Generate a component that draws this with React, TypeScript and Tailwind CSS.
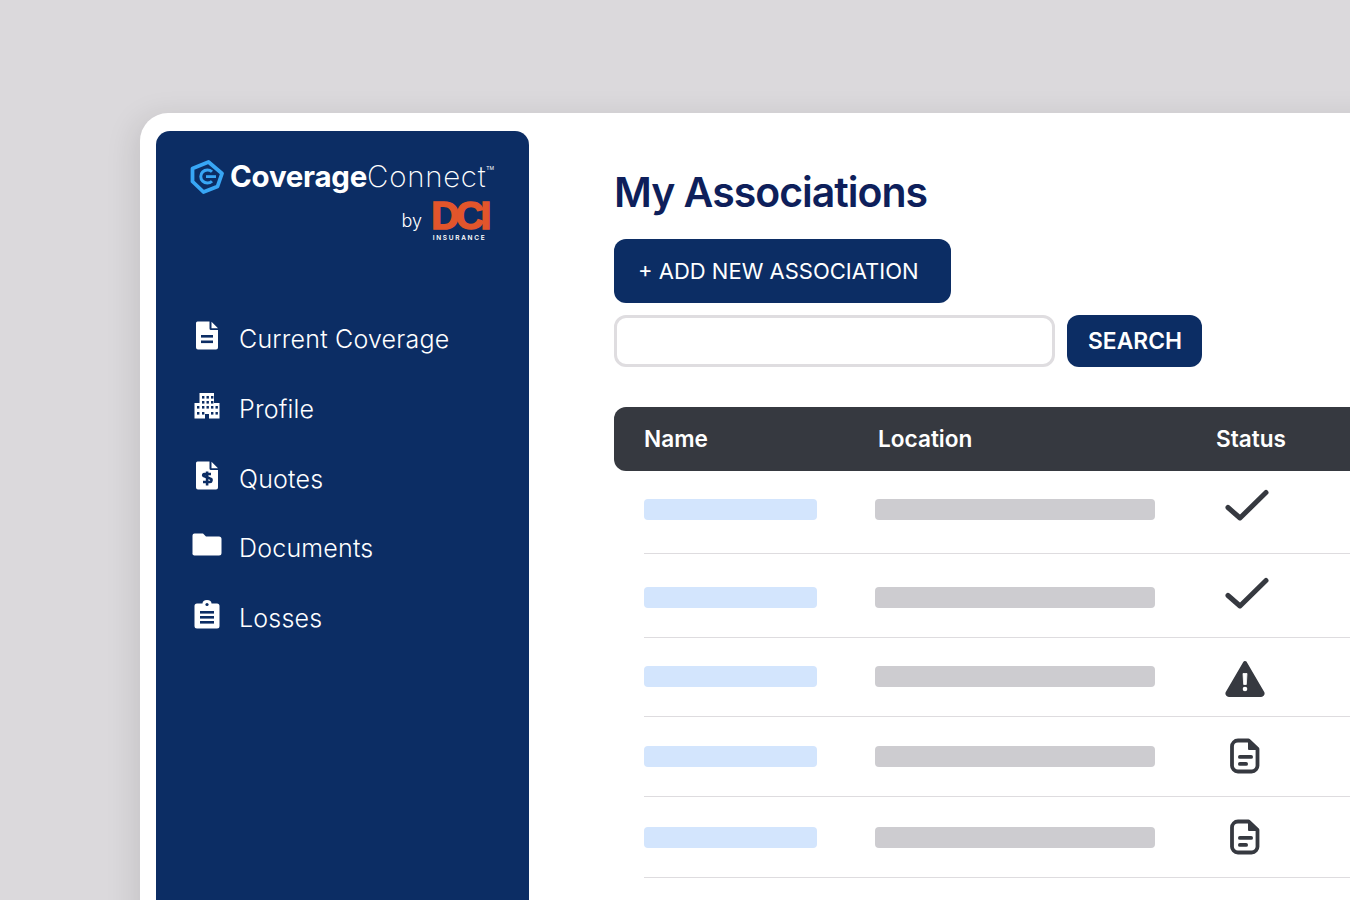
import type { ReactNode } from "react";

const NAVY = "#0c2d64";

function FileIcon() {
  return (
    <svg width="24" height="29" viewBox="0 0 24 29">
      <path d="M2.5 0.5H14.5V7.5A1.5 1.5 0 0 0 16 9H23V26.5A2 2 0 0 1 21 28.5H3A2 2 0 0 1 1 26.5V2A1.5 1.5 0 0 1 2.5 0.5Z" fill="#fff" />
      <path d="M16.5 0.8L23 7.3H16.5Z" fill="#fff" />
      <rect x="6" y="14" width="12" height="2.6" fill={NAVY} />
      <rect x="6" y="19.5" width="12" height="2.6" fill={NAVY} />
    </svg>
  );
}

function BuildingIcon() {
  const holes = [
    [8, 3], [12.5, 3], [17, 3],
    [8, 8], [12.5, 8], [17, 8],
    [3, 13], [8, 13], [12.5, 13], [17, 13], [21.5, 13],
    [3, 19], [8, 19], [17, 19], [21.5, 19],
  ];
  return (
    <svg width="26" height="26" viewBox="0 0 26 26">
      <path d="M5.5 0H20V10H25.5V25.5H15V21H11V25.5H0.5V10H5.5Z" fill="#fff" />
      {holes.map(([x, y]) => (
        <rect key={`${x}-${y}`} x={x} y={y} width="2.4" height="2.6" fill={NAVY} />
      ))}
    </svg>
  );
}

function QuoteIcon() {
  return (
    <svg width="24" height="29" viewBox="0 0 24 29">
      <path d="M2.5 0.5H14.5V7.5A1.5 1.5 0 0 0 16 9H23V26.5A2 2 0 0 1 21 28.5H3A2 2 0 0 1 1 26.5V2A1.5 1.5 0 0 1 2.5 0.5Z" fill="#fff" />
      <path d="M16.5 0.8L23 7.3H16.5Z" fill="#fff" />
      <path d="M16 13H9.5A1.2 1.2 0 0 0 8.5 15L15 17.5A1.7 1.7 0 0 1 14.5 21H8" fill="none" stroke={NAVY} strokeWidth="2.6" />
      <rect x="10.8" y="10.5" width="2.6" height="14" fill={NAVY} />
    </svg>
  );
}

function FolderIcon() {
  return (
    <svg width="30" height="23" viewBox="0 0 30 23">
      <path d="M2.5 0.5H11L14 3.5H27A2.5 2.5 0 0 1 29.5 6V20A2.5 2.5 0 0 1 27 22.5H2.5A2 2 0 0 1 0.5 20V2.5A2 2 0 0 1 2.5 0.5Z" fill="#fff" />
    </svg>
  );
}

function ClipboardIcon() {
  return (
    <svg width="26" height="29" viewBox="0 0 26 29">
      <path d="M3 3.5H8.5A4.5 3.5 0 0 1 17.5 3.5H23A2.5 2.5 0 0 1 25.5 6V26A2.5 2.5 0 0 1 23 28.5H3A2.5 2.5 0 0 1 0.5 26V6A2.5 2.5 0 0 1 3 3.5Z" fill="#fff" />
      <circle cx="13" cy="4.5" r="1.6" fill={NAVY} />
      <rect x="6" y="11" width="14" height="2.6" fill={NAVY} />
      <rect x="6" y="16" width="14" height="2.6" fill={NAVY} />
      <rect x="6" y="21" width="14" height="2.6" fill={NAVY} />
    </svg>
  );
}

function CheckIcon() {
  return (
    <svg width="44" height="34" viewBox="0 0 44 34" className="-mt-[10px]">
      <path d="M3 18.5L15 29L41 3.5" fill="none" stroke="#363940" strokeWidth="5" strokeLinecap="round" strokeLinejoin="round" />
    </svg>
  );
}

function WarningIcon() {
  return (
    <svg width="40" height="38" viewBox="0 0 40 38" className="-mt-[6px]">
      <path d="M20 3L37.5 33A1.5 1.5 0 0 1 36 35H4A1.5 1.5 0 0 1 2.5 33Z" fill="#363940" stroke="#363940" strokeWidth="4" strokeLinejoin="round" />
      <path d="M18 13.5H22L21.3 24.5H18.7Z" fill="#fff" stroke="#fff" strokeWidth="0.8" strokeLinejoin="round" />
      <circle cx="20" cy="29" r="2.3" fill="#fff" />
    </svg>
  );
}

function DocIcon() {
  return (
    <svg width="30" height="36" viewBox="0 0 30 36" className="ml-[5px] -mt-[8px]">
      <path d="M8 2.5H18.5L27.5 11V27A6 6 0 0 1 21.5 33.5H8A6 6 0 0 1 2 27V8.5A6 6 0 0 1 8 2.5Z" fill="#fff" stroke="#363940" strokeWidth="3.8" strokeLinejoin="round" />
      <path d="M19 2.5L27.5 11H19Z" fill="#363940" stroke="#363940" strokeWidth="2" strokeLinejoin="round" />
      <rect x="8" y="17" width="15" height="3.8" rx="1.9" fill="#363940" />
      <rect x="8" y="24" width="10" height="3.8" rx="1.9" fill="#363940" />
    </svg>
  );
}

function LogoMark() {
  return (
    <svg width="34" height="34" viewBox="0 0 34 34">
      <path d="M2.5 8.5L18.5 2L32 13.5L27.5 26.5L13.5 32L2.5 21.5Z" fill="none" stroke="#38a6f5" strokeWidth="3.8" strokeLinejoin="round" />
      <path d="M22 11.8A6.6 6.6 0 1 0 22 21.2" fill="none" stroke="#38a6f5" strokeWidth="3" />
      <rect x="16" y="15.2" width="10" height="2.8" fill="#38a6f5" />
    </svg>
  );
}

const navItems: { label: string; icon: ReactNode }[] = [
  { label: "Current Coverage", icon: <FileIcon /> },
  { label: "Profile", icon: <BuildingIcon /> },
  { label: "Quotes", icon: <QuoteIcon /> },
  { label: "Documents", icon: <FolderIcon /> },
  { label: "Losses", icon: <ClipboardIcon /> },
];

const rows: { cls: string; icon: ReactNode }[] = [
  { cls: "h-[83px] pt-[28px]", icon: <CheckIcon /> },
  { cls: "h-[84px] pt-[33px]", icon: <CheckIcon /> },
  { cls: "h-[79px] pt-[28px]", icon: <WarningIcon /> },
  { cls: "h-[80px] pt-[29px]", icon: <DocIcon /> },
  { cls: "h-[81px] pt-[30px]", icon: <DocIcon /> },
];

export default function App() {
  return (
    <div className="h-[900px] w-[1350px] overflow-hidden bg-[#dbd9dc] pl-[140px] pt-[113px] font-['Inter',sans-serif]">
      <div className="flex h-[900px] w-[1300px] rounded-tl-[28px] bg-white pl-[16px] pt-[18px] shadow-[-6px_4px_30px_rgba(0,0,0,0.1)]">
        {/* sidebar */}
        <aside className="h-[800px] w-[373px] shrink-0 rounded-t-[14px] bg-[#0c2d64] pl-[34px] pt-[28px]">
          <div className="flex h-[36px] items-center">
            <LogoMark />
            <span className="ml-[6px] whitespace-nowrap text-[29.5px] leading-none text-white">
              <span className="font-bold tracking-[-0.25px]">Coverage</span>
              <span className="font-extralight tracking-[0.7px]">Connect</span>
            </span>
            <span className="mb-[18px] text-[5px] leading-none text-white">TM</span>
          </div>
          <div className="mt-[6px] flex w-[297px] items-start justify-end">
            <span className="mr-[10px] mt-[8px] text-[18px] font-light leading-[24px] text-white">by</span>
            <div className="flex w-[55px] flex-col items-center">
              <span className="block h-[30px] font-['Liberation_Sans',sans-serif] text-[39px] font-bold leading-[30px] tracking-[-3.5px] text-[#e2552b] [-webkit-text-stroke:1.5px_#e2552b]">DCI</span>
              <span className="mt-[3px] block text-[6.5px] font-semibold leading-[8px] tracking-[1.7px] text-white">INSURANCE</span>
            </div>
          </div>

          <nav className="mt-[63px]">
            {navItems.map((item) => (
              <div key={item.label} className="flex h-[69.7px] items-center">
                <div className="mb-[8px] flex w-[33px] justify-center">{item.icon}</div>
                <span className="ml-[16px] text-[25px] font-light leading-none tracking-[0.2px] text-white">{item.label}</span>
              </div>
            ))}
          </nav>
        </aside>

        {/* main */}
        <main className="ml-[85px] min-w-0 flex-1">
          <h1 className="mt-[36px] text-[41px] font-semibold leading-[50px] tracking-[-1px] text-[#0e1f5b]">My Associations</h1>
          <button className="mt-[22px] block h-[64px] w-[337px] rounded-[12px] bg-[#0c2d64] pl-[24px] text-left text-[22px] text-white">
            + ADD NEW ASSOCIATION
          </button>
          <div className="mt-[12px] flex gap-[12px]">
            <input className="h-[52px] w-[441px] rounded-[12px] border-[3px] border-[#dfdde0] bg-white" />
            <button className="h-[52px] w-[135px] rounded-[12px] bg-[#0c2d64] pl-[1px] text-[22.8px] font-semibold text-white">SEARCH</button>
          </div>

          <div className="mt-[40px] flex h-[64px] items-center rounded-l-[12px] bg-[#363940] text-[22.6px] font-semibold text-white">
            <span className="ml-[30px] w-[234px]">Name</span>
            <span className="w-[338px]">Location</span>
            <span>Status</span>
          </div>

          <div className="ml-[30px]">
            {rows.map((row, i) => (
              <div key={i} className={`flex items-start border-b border-[#dedcdf] ${row.cls}`}>
                <div className="h-[21px] w-[173px] rounded-[4px] bg-[#d3e5fd]" />
                <div className="ml-[58px] h-[21px] w-[280px] rounded-[4px] bg-[#cdccd0]" />
                <div className="ml-[70px]">{row.icon}</div>
              </div>
            ))}
          </div>
        </main>
      </div>
    </div>
  );
}
